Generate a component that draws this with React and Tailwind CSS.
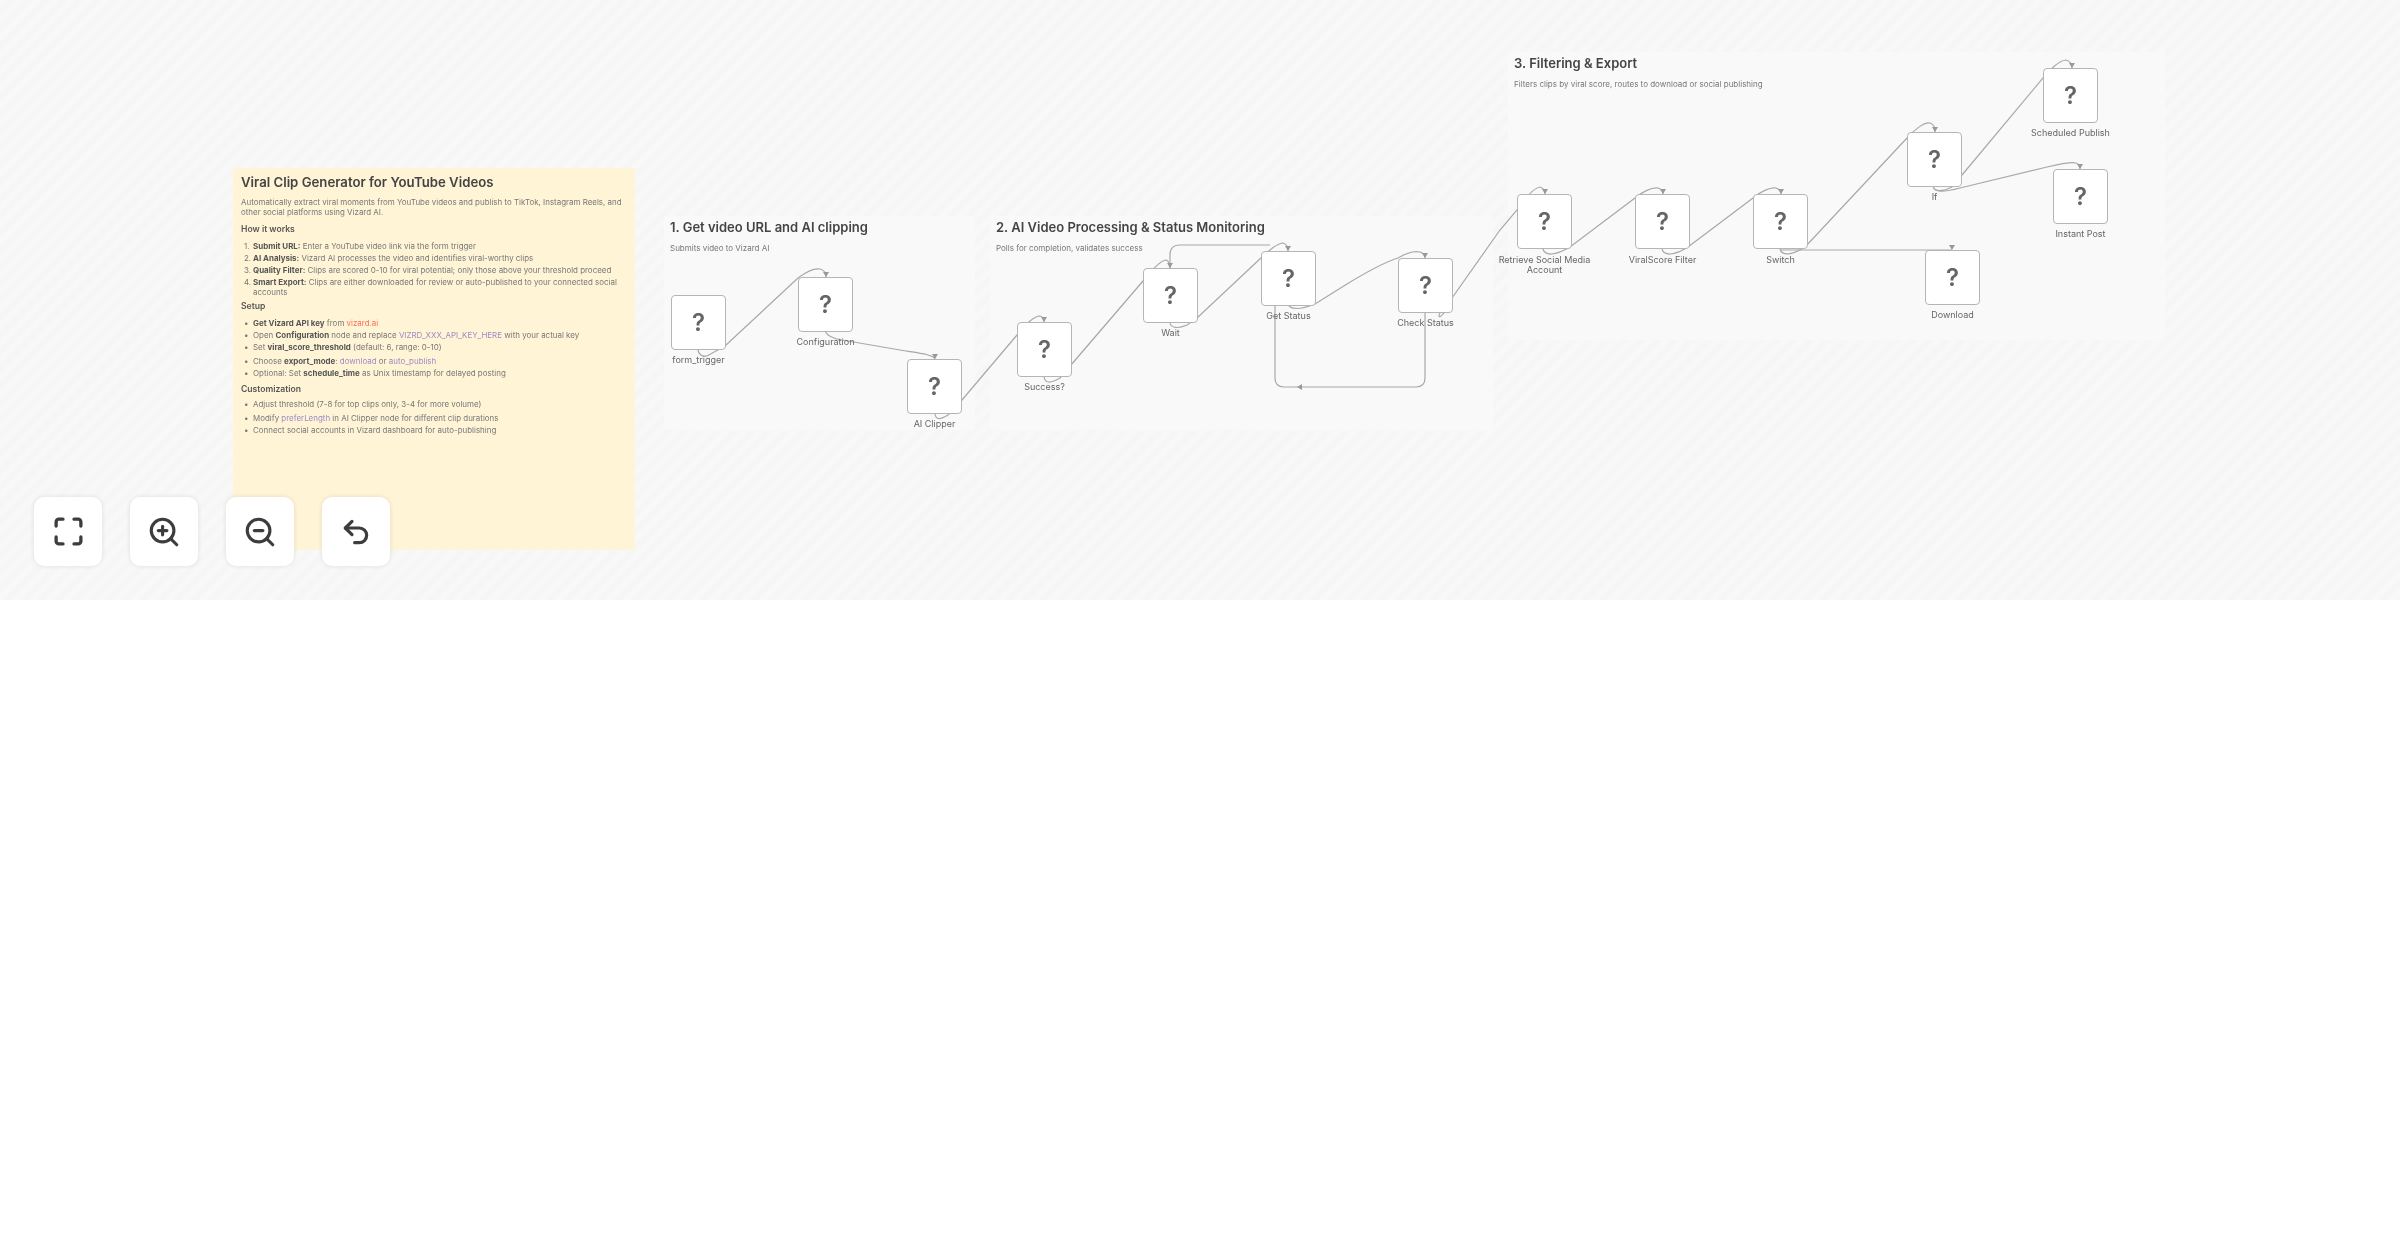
import { Maximize, ZoomIn, ZoomOut, Undo2 } from 'lucide-react'

const nodes = [
  { id: 'form', label: 'form_trigger', x: 671, y: 295 },
  { id: 'config', label: 'Configuration', x: 798, y: 277 },
  { id: 'clipper', label: 'AI Clipper', x: 907, y: 359 },
  { id: 'success', label: 'Success?', x: 1017, y: 322 },
  { id: 'wait', label: 'Wait', x: 1143, y: 268 },
  { id: 'status', label: 'Get Status', x: 1261, y: 251 },
  { id: 'check', label: 'Check Status', x: 1398, y: 258 },
  { id: 'retrieve', label: 'Retrieve Social Media Account', x: 1517, y: 194, low: true },
  { id: 'viral', label: 'ViralScore Filter', x: 1635, y: 194, low: true },
  { id: 'switch', label: 'Switch', x: 1753, y: 194, low: true },
  { id: 'if', label: 'If', x: 1907, y: 132 },
  { id: 'download', label: 'Download', x: 1925, y: 250 },
  { id: 'scheduled', label: 'Scheduled Publish', x: 2043, y: 68 },
  { id: 'instant', label: 'Instant Post', x: 2053, y: 169 },
]

// smooth-ish edge routes, traced off the picture
const edges = [
  'M698 349 C698 354 702 357 707 356 L725 346 L798 278 C806 272 814 268 820 269 C824 270 826 273 826 277',
  'M825 331 C828 337 834 339 842 340 L900 350 C918 353 932 354 935 359',
  'M935 413 C935 420 940 420 948 415 L962 400 L1017 335 C1024 326 1034 316 1040 316 C1043 317 1044 319 1044 322',
  'M1044 377 C1045 383 1050 384 1060 378 L1071 365 L1143 281 C1150 272 1160 261 1166 260 C1169 261 1170 264 1170 268',
  'M1170 323 C1171 328 1178 329 1187 325 L1197 318 L1262 257 C1268 251 1278 243 1283 243 C1286 244 1288 247 1288 251',
  'M1288 304 C1290 310 1300 310 1315 304 L1347 284 C1365 273 1385 262 1398 258 C1408 252 1416 251 1420 252 C1423 253 1425 255 1425 258',
  'M1425 313 L1425 378 Q1425 387 1416 387 L1284 387 Q1275 387 1275 378 L1275 304',
  'M1270 245 L1180 245 Q1170 245 1170 255 L1170 268',
  'M1440 313 C1436 320 1444 318 1452 298 L1500 230 L1517 210 C1525 198 1534 188 1540 187 C1543 188 1545 190 1545 194',
  'M1543 249 C1545 256 1555 256 1570 247 L1635 198 C1642 192 1652 187 1658 188 C1661 189 1663 191 1663 194',
  'M1662 249 C1664 256 1674 256 1688 247 L1753 198 C1760 192 1770 187 1776 188 C1779 189 1781 191 1781 194',
  'M1780 249 C1782 256 1792 256 1806 246 L1907 138 C1914 130 1924 122 1930 123 C1933 124 1935 127 1935 132',
  'M1780 250 L1952 250',
  'M1933 186 C1934 192 1942 192 1952 187 L1962 175 L2043 78 C2049 70 2060 60 2066 60 C2070 61 2072 64 2072 68',
  'M1933 186 C1934 193 1945 192 1960 188 L2047 167 C2060 164 2072 162 2076 163 C2079 164 2080 166 2080 169',
]

const arrows = [
  [826, 277], [935, 359], [1044, 322], [1170, 268], [1288, 251], [1425, 258],
  [1545, 194], [1663, 194], [1781, 194], [1935, 132], [1952, 250], [2072, 68], [2080, 169],
]

function Node({ label, x, y, low }) {
  return (
    <div className="absolute flex w-[55px] flex-col items-center" style={{ left: x, top: y }}>
      <div className="flex h-[55px] w-[55px] items-center justify-center rounded-[4px] border border-[#b5b5b5] bg-white text-[24px] font-semibold leading-none text-[#666]">
        ?
      </div>
      <div className={`${low ? 'mt-[6px]' : 'mt-[5px]'} w-[100px] text-center text-[9px] leading-[10px] text-[#666]`}>{label}</div>
    </div>
  )
}

function Group({ x, y, w, h, title, sub }) {
  return (
    <div
      className="absolute rounded-[2px] bg-[#f9f9f9] px-[6px] py-[2px]"
      style={{ left: x, top: y, width: w, height: h }}
    >
      <div className="text-[13px] font-semibold leading-[18px] text-[#444]">{title}</div>
      <div className="mt-[7px] text-[8px] leading-[10px] text-[#777]">{sub}</div>
    </div>
  )
}

function Code({ children }) {
  return <span className="text-[#9b8cc4]">{children}</span>
}

function Item({ n, children, className = '' }) {
  return (
    <li className={`flex ${className}`}>
      <span className="w-[12px] shrink-0 pl-[3px]">{n}</span>
      <span>{children}</span>
    </li>
  )
}

function Sticky() {
  return (
    <div className="absolute left-[233px] top-[168px] h-[382px] w-[402px] bg-[#fff4d6] px-[8px] pt-[5px] text-[7.95px] leading-[10px] text-[#777]">
      <h1 className="text-[13.2px] font-semibold leading-[18px] text-[#444]">Viral Clip Generator for YouTube Videos</h1>
      <p className="mt-[6px]">
        Automatically extract viral moments from YouTube videos and publish to TikTok, Instagram Reels, and other social platforms using Vizard AI.
      </p>
      <h2 className="mt-[6px] text-[8.6px] font-semibold leading-[12px] text-[#555]">How it works</h2>
      <ol className="mt-[6px] flex flex-col gap-[2px]">
        <Item n="1."><b className="text-[#555]">Submit URL:</b> Enter a YouTube video link via the form trigger</Item>
        <Item n="2."><b className="text-[#555]">AI Analysis:</b> Vizard AI processes the video and identifies viral-worthy clips</Item>
        <Item n="3."><b className="text-[#555]">Quality Filter:</b> Clips are scored 0-10 for viral potential; only those above your threshold proceed</Item>
        <Item n="4."><b className="text-[#555]">Smart Export:</b> Clips are either downloaded for review or auto-published to your connected social accounts</Item>
      </ol>
      <h2 className="mt-[3px] text-[8.6px] font-semibold leading-[12px] text-[#555]">Setup</h2>
      <ul className="mt-[6px] flex flex-col gap-[2px]">
        <Item n="•"><b className="text-[#555]">Get Vizard API key</b> from <span className="text-[#ff6d5a]">vizard.ai</span></Item>
        <Item n="•">Open <b className="text-[#555]">Configuration</b> node and replace <Code>VIZRD_XXX_API_KEY_HERE</Code> with your actual key</Item>
        <Item n="•">Set <b className="text-[#555]">viral_score_threshold</b> (default: 6, range: 0-10)</Item>
        <Item n="•" className="mt-[2px]">Choose <b className="text-[#555]">export_mode</b>: <Code>download</Code> or <Code>auto_publish</Code></Item>
        <Item n="•">Optional: Set <b className="text-[#555]">schedule_time</b> as Unix timestamp for delayed posting</Item>
      </ul>
      <h2 className="mt-[5px] text-[8.6px] font-semibold leading-[12px] text-[#555]">Customization</h2>
      <ul className="mt-[4px] flex flex-col gap-[2px]">
        <Item n="•">Adjust threshold (7-8 for top clips only, 3-4 for more volume)</Item>
        <Item n="•" className="mt-[2px]">Modify <Code>preferLength</Code> in AI Clipper node for different clip durations</Item>
        <Item n="•">Connect social accounts in Vizard dashboard for auto-publishing</Item>
      </ul>
    </div>
  )
}

function ToolButton({ children }) {
  return (
    <button className="flex h-[69px] w-[68px] items-center justify-center rounded-[10px] bg-white text-[#3d3d3d] shadow-[0_0_5px_rgba(0,0,0,0.1)]">
      {children}
    </button>
  )
}

export default function App() {
  return (
    <div className="min-h-[1260px] bg-white font-[Inter,sans-serif]">
      <div className="relative h-[600px] overflow-hidden bg-[repeating-linear-gradient(135deg,#f8f8f8_0,#f8f8f8_6px,#f6f6f6_6px,#f6f6f6_12px)]">
        <div className="absolute inset-0 blur-[0.4px]">
          <Sticky />
          <Group x={664} y={216} w={311} h={214} title="1. Get video URL and AI clipping" sub="Submits video to Vizard AI" />
          <Group x={990} y={216} w={503} h={214} title="2. AI Video Processing & Status Monitoring" sub="Polls for completion, validates success" />
          <Group x={1508} y={52} w={657} h={288} title="3. Filtering & Export" sub="Filters clips by viral score, routes to download or social publishing" />

          <svg className="absolute left-0 top-0" width="2400" height="600" fill="none">
            {edges.map((d, i) => (
              <path key={i} d={d} stroke="#a8a8a8" strokeWidth="1.2" />
            ))}
            {arrows.map(([x, y], i) => (
              <path key={i} d={`M${x - 3} ${y - 5} L${x + 3} ${y - 5} L${x} ${y} Z`} fill="#999" />
            ))}
            <path d="M1302 384 L1302 390 L1297 387 Z" fill="#999" />
          </svg>

          {nodes.map(n => (
            <Node key={n.id} {...n} />
          ))}
        </div>

        {/* zoom controls */}
        <div className="absolute left-[34px] top-[497px] flex gap-[28px]">
          <ToolButton><Maximize size={33} strokeWidth={2.4} className="blur-[0.4px]" /></ToolButton>
          <ToolButton><ZoomIn size={34} strokeWidth={2.2} className="blur-[0.4px]" /></ToolButton>
          <ToolButton><ZoomOut size={34} strokeWidth={2.2} className="blur-[0.4px]" /></ToolButton>
          <ToolButton><Undo2 size={32} strokeWidth={2.4} className="blur-[0.4px]" /></ToolButton>
        </div>
      </div>
    </div>
  )
}
